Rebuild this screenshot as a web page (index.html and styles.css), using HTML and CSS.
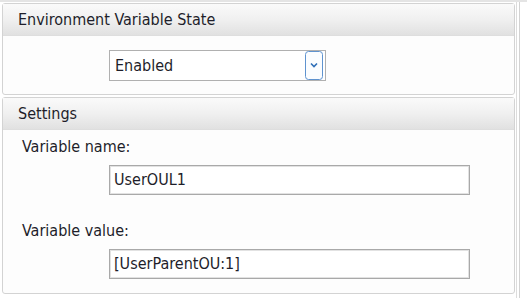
FILE: index.html
```html
<!DOCTYPE html>
<html lang="en">
<head>
    <meta charset="UTF-8">
    <title>Environment Variable</title>
    <link rel="stylesheet" href="styles.css">
</head>
<body>
    <div class="frame">
        <div class="panels">
            <div class="panel">
                <div class="panel-head">Environment Variable State</div>
                <div class="panel-body state-body">
                    <div class="select">
                        <span class="select-text">Enabled</span>
                        <span class="select-btn">
                            <svg width="18" height="29" viewBox="0 0 18 29">
                                <rect x="0.5" y="0.5" width="17" height="28" rx="3" fill="#fbfdff" stroke="#5f93cf"/>
                                <path d="M6 12.5 L9 15.5 L12 12.5" fill="none" stroke="#2f6fb8" stroke-width="1.6"/>
                            </svg>
                        </span>
                    </div>
                </div>
            </div>
            <div class="panel">
                <div class="panel-head">Settings</div>
                <div class="panel-body settings-body">
                    <div class="field-label">Variable name:</div>
                    <div class="field-input">UserOUL1</div>
                    <div class="field-label second">Variable value:</div>
                    <div class="field-input">[UserParentOU:1]</div>
                </div>
            </div>
        </div>
        <div class="edge"></div>
    </div>
</body>
</html>
```
FILE: styles.css
```css
body {
    margin: 0;
    background: #fff;
    font-family: "DejaVu Sans Condensed", "DejaVu Sans", sans-serif;
    font-size: 16px;
    color: #1e1e2a;
}
.frame {
    display: flex;
    height: 298px;
    border-top: 2px solid #e4e4e4;
    box-sizing: border-box;
}
.panels {
    width: 515px;
    padding: 1px 0 0 2px;
    box-sizing: border-box;
    display: flex;
    flex-direction: column;
    gap: 2px;
}
.edge {
    width: 2px;
    margin-left: 1px;
    border-left: 1px solid #dcdcdc;
    border-right: 1px solid #d2d2d2;
}
.panel {
    border: 1px solid #d3d3d3;
    border-radius: 3px;
    background: #fdfdfd;
}
.panel-head {
    height: 31px;
    line-height: 31px;
    padding-left: 15px;
    background: linear-gradient(#fafafa, #f0f0f0 50%, #e1e1e1);
    border-bottom: 1px solid #dedede;
}
.state-body {
    padding: 14px 0 13px 106px;
}
.select {
    width: 215px;
    height: 29px;
    border: 1px solid #b0b0b0;
    background: #fff;
    display: flex;
    align-items: center;
    justify-content: space-between;
}
.select-text {
    padding-left: 5px;
}
.select-btn {
    display: flex;
    margin-right: 2px;
}
.settings-body {
    padding: 7px 0 14px 19px;
}
.field-label {
    height: 20px;
    line-height: 20px;
}
.field-label.second {
    margin-top: 26px;
}
.field-input {
    margin: 8px 0 0 87px;
    width: 355px;
    height: 28px;
    line-height: 28px;
    padding-left: 4px;
    box-sizing: content-box;
    border: 1px solid #a9a9a9;
    box-shadow: inset 0 0 0 1px #e2e2e2;
    background: #fff;
}
```
